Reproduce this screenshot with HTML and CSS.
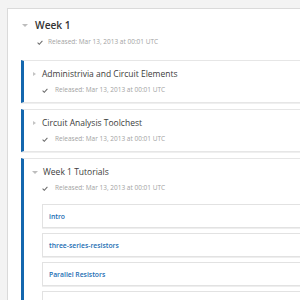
FILE: index.html
```html
<!DOCTYPE html>
<html>
<head>
<meta charset="utf-8">
<link rel="stylesheet" href="styles.css">
</head>
<body>
<div class="section">
  <div class="sec-head">
    <span class="tri-down big"></span>
    <span class="sec-title">Week 1</span>
  </div>
  <div class="released sec-rel">
    <svg class="check" viewBox="0 0 10 8"><polyline points="1,4.2 3.8,7 9,1.2" /></svg>
    <span>Released: Mar 13, 2013 at 00:01 UTC</span>
  </div>
  <div class="subs">
    <div class="sub">
      <div class="sub-head"><span class="tri-right"></span><span class="sub-title">Administrivia and Circuit Elements</span></div>
      <div class="released sub-rel">
        <svg class="check" viewBox="0 0 10 8"><polyline points="1,4.2 3.8,7 9,1.2" /></svg>
        <span>Released: Mar 13, 2013 at 00:01 UTC</span>
      </div>
    </div>
    <div class="sub">
      <div class="sub-head"><span class="tri-right"></span><span class="sub-title">Circuit Analysis Toolchest</span></div>
      <div class="released sub-rel">
        <svg class="check" viewBox="0 0 10 8"><polyline points="1,4.2 3.8,7 9,1.2" /></svg>
        <span>Released: Mar 13, 2013 at 00:01 UTC</span>
      </div>
    </div>
    <div class="sub open">
      <div class="sub-head"><span class="tri-down"></span><span class="sub-title">Week 1 Tutorials</span></div>
      <div class="released sub-rel">
        <svg class="check" viewBox="0 0 10 8"><polyline points="1,4.2 3.8,7 9,1.2" /></svg>
        <span>Released: Mar 13, 2013 at 00:01 UTC</span>
      </div>
      <div class="units">
        <div class="unit"><a>intro</a></div>
        <div class="unit"><a>three-series-resistors</a></div>
        <div class="unit"><a>Parallel Resistors</a></div>
        <div class="unit"><a>combination-resistors</a></div>
      </div>
    </div>
  </div>
</div>
</body>
</html>
```
FILE: styles.css
```css
html, body {
  margin: 0;
  padding: 0;
  background: #f3f3f3;
  overflow: hidden;
}
body {
  font-family: "Open Sans", "DejaVu Sans", sans-serif;
  padding: 8px 0 0 7px;
}
.section {
  background: #fff;
  border: 1px solid #dadada;
  border-right: 0;
  border-bottom: 0;
  height: 400px;
}
.sec-head {
  display: flex;
  align-items: center;
  height: 16px;
  padding-top: 8px;
  padding-left: 14px;
}
.sec-title {
  font-size: 10.2px;
  font-weight: 600;
  color: #333;
  margin-left: 7px;
  line-height: 16px;
}
.tri-down {
  width: 0;
  height: 0;
  border-left: 3px solid transparent;
  border-right: 3px solid transparent;
  border-top: 3.5px solid #bdbdbd;
}
.tri-right {
  width: 0;
  height: 0;
  border-top: 2.5px solid transparent;
  border-bottom: 2.5px solid transparent;
  border-left: 3px solid #c4c4c4;
}
.released {
  display: flex;
  align-items: center;
  height: 10px;
  margin-top: 4px;
  font-size: 6.5px;
  color: #a3a3a3;
  line-height: 10px;
}
.check {
  width: 6px;
  height: 5px;
  fill: none;
  stroke: #6a6a6a;
  stroke-width: 1.7;
}
.sec-rel { padding-left: 29px; }
.sec-rel span { margin-left: 5px; }
.subs {
  margin: 13px 0 0 13px;
  display: flex;
  flex-direction: column;
  gap: 6px;
}
.sub {
  border: 1px solid #e6e6e6;
  border-left: 3px solid #1467ae;
  border-right: 0;
  padding: 6px 0 7px 0;
  box-shadow: 0 1px 0 #efefef;
}
.sub-head {
  display: flex;
  align-items: center;
  height: 14px;
  padding-left: 9px;
}
.sub.open .sub-head { padding-left: 8px; }
.sub-title {
  font-size: 8.5px;
  color: #3c3c3c;
  margin-left: 6px;
  line-height: 14px;
}
.sub.open .sub-title { margin-left: 5px; }
.sub-rel { padding-left: 18px; }
.sub-rel span { margin-left: 7px; }
.units {
  margin: 11px 0 0 18px;
  display: flex;
  flex-direction: column;
  gap: 5px;
}
.unit {
  border: 1px solid #e2e2e2;
  border-right: 0;
  height: 22px;
  display: flex;
  align-items: center;
  padding-left: 6px;
  box-shadow: 0 1px 0 #eeeeee;
}
.unit a {
  font-size: 6.8px;
  font-weight: 600;
  color: #1b6db3;
}
```
